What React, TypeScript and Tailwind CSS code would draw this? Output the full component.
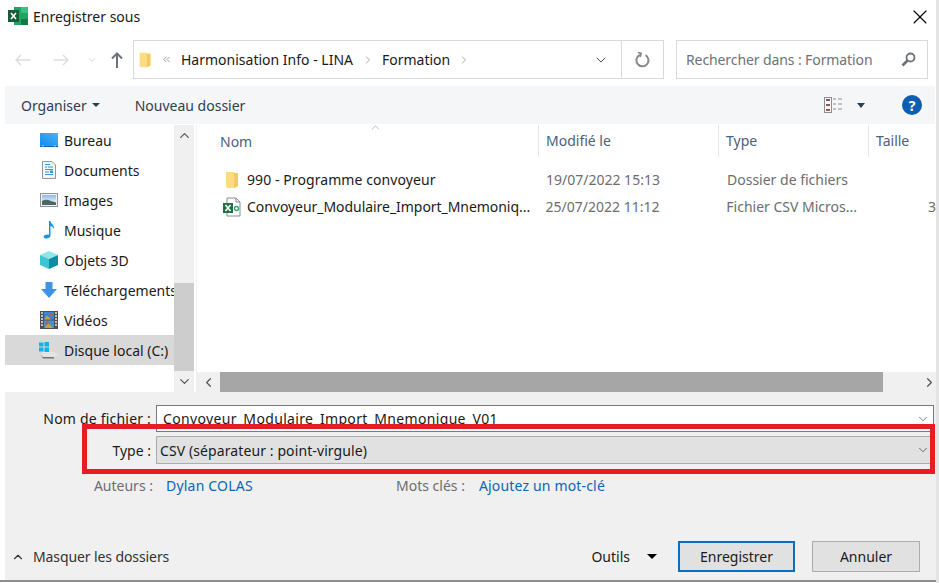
import { ChevronDown, ChevronLeft, ChevronRight, ChevronUp, ChevronsLeft, X } from 'lucide-react';

const font = { fontFamily: '"Noto Sans", "Open Sans", sans-serif' };

function FolderIcon() {
  return (
    <svg width="14" height="18" viewBox="0 0 14 18">
      <path d="M1 1h8l1 1h3v13l-4 2H2l-1-2z" fill="#fbdc85" />
      <path d="M9 2h4v13l-4 2z" fill="#f4c95f" />
    </svg>
  );
}

function ExcelCsvIcon() {
  return (
    <svg width="20" height="20" viewBox="0 0 20 20">
      <path d="M5 1h9l4 4v14H5z" fill="#fff" stroke="#8a8a8a" />
      <path d="M14 1v4h4" fill="none" stroke="#8a8a8a" />
      <rect x="1" y="6" width="10" height="10" fill="#1e7145" />
      <path d="M3.500 8l5 6M8.500 8l-5 6" stroke="#fff" strokeWidth="1.600" />
      <circle cx="14.500" cy="11.500" r="2" fill="none" stroke="#35a06b" strokeWidth="1.300" />
    </svg>
  );
}

function BureauIcon() {
  return (
    <svg width="18" height="14" viewBox="0 0 18 14">
      <defs>
        <linearGradient id="desk" x1="0" y1="1" x2="1" y2="0">
          <stop offset="0" stopColor="#0f8bee" />
          <stop offset="1" stopColor="#4cb2f5" />
        </linearGradient>
      </defs>
      <rect width="18" height="12.500" fill="url(#desk)" />
      <path d="M0 12.500h18V14H0z" fill="#0a5ea8" />
      <path d="M2 13h2M14 13h2" stroke="#9ed4f8" />
    </svg>
  );
}

function DocumentsIcon() {
  return (
    <svg width="14" height="18" viewBox="0 0 14 18">
      <path d="M.5.5h9.500l3.500 3.500v13.500H.5z" fill="#f3f5f7" stroke="#8f979e" />
      <path d="M3 3.500h5M3 6h2M6 6h5M3 8.500h8M3 11h4M8 11h3M3 13.500h8" stroke="#3b94d6" />
      <rect x="8" y="9.500" width="3" height="2.500" fill="#3b94d6" />
    </svg>
  );
}

function ImagesIcon() {
  return (
    <svg width="18" height="14" viewBox="0 0 18 14">
      <defs>
        <linearGradient id="sky" x1="0" y1="0" x2="0" y2="1">
          <stop offset="0" stopColor="#8dbbe0" />
          <stop offset="0.6" stopColor="#d5e6ee" />
        </linearGradient>
      </defs>
      <rect x="0.500" y="0.500" width="17" height="13" fill="#f4f4f4" stroke="#8d9298" />
      <rect x="2" y="2" width="14" height="10" fill="url(#sky)" />
      <path d="M2 8c3-2 6-1.500 9 0l5 1.500V12H2z" fill="#4f6666" />
    </svg>
  );
}

function MusicIcon() {
  return (
    <svg width="12" height="18" viewBox="0 0 12 18">
      <path d="M6 0h1.500c.5 3 4 3.500 3.500 8-1-2-2.500-3-3.500-3v9.500c0 2-2.500 3.500-5 3C.5 17 0 15 2 14c1.500-.8 3-.7 4-.2z" fill="#1a93e8" />
    </svg>
  );
}

function CubeIcon() {
  return (
    <svg width="18" height="18" viewBox="0 0 18 18">
      <path d="M9 0l9 4-9 4-9-4z" fill="#8fe6e8" />
      <path d="M0 4l9 4v10l-9-4z" fill="#3cc6d2" />
      <path d="M18 4l-9 4v10l9-4z" fill="#0d8ca6" />
    </svg>
  );
}

function DownloadIcon() {
  return (
    <svg width="16" height="16" viewBox="0 0 16 16">
      <path d="M4.500 0h7v7H16l-8 9-8-9h4.500z" fill="#3f93e4" />
    </svg>
  );
}

function VideoIcon() {
  return (
    <svg width="18" height="18" viewBox="0 0 18 18">
      <rect width="18" height="18" fill="#4b5058" />
      <rect x="4" y="1" width="10" height="7.500" fill="#3f86c9" />
      <rect x="4" y="9.500" width="10" height="7.500" fill="#4f8fc2" />
      <path d="M4 8.500l3-4 4 4zM5 17l3-5 5 5z" fill="#c9a23a" />
      <circle cx="11" cy="4" r="1.600" fill="#d0544a" />
      <circle cx="7" cy="12" r="1.600" fill="#d0544a" />
      <path d="M1 2h2M1 5h2M1 8h2M1 11h2M1 14h2M15 2h2M15 5h2M15 8h2M15 11h2M15 14h2" stroke="#e6e6e6" strokeWidth="1.300" />
    </svg>
  );
}

function DiskIcon() {
  return (
    <svg width="20" height="18" viewBox="0 0 20 18">
      <path d="M3 11h11l6 2.500-5 2.500H3z" fill="#e4e5e7" />
      <path d="M2 13.500l2 2.500h11v1.500H4z" fill="#6f7276" />
      <path d="M0 1.500h4.500v4H0zM5.500 1h4.500v4.500H5.500zM0 6.500h4.500v4H0zM5.500 6.500h4.500V11H5.500z" fill="#12b0ee" />
    </svg>
  );
}

function NavArrow({ flip }: { flip?: boolean }) {
  return (
    <svg width="16" height="12" viewBox="0 0 16 12" className={flip ? '-scale-x-100 text-[#dcdee0]' : 'text-[#dcdee0]'}>
      <path d="M15.500 6H1M6 1L1 6l5 5" fill="none" stroke="currentColor" strokeWidth="1.500" />
    </svg>
  );
}

function RefreshIcon() {
  return (
    <svg width="16" height="16" viewBox="0 0 16 16" className="text-[#85898e]">
      <path d="M10.500 3.200A6 6 0 1 1 5 2.900" fill="none" stroke="currentColor" strokeWidth="2" />
      <path d="M3 .5l3 .9-.8 3.600" fill="none" stroke="currentColor" strokeWidth="1.800" />
    </svg>
  );
}

function SearchIcon() {
  return (
    <svg width="15" height="15" viewBox="0 0 15 15" className="ml-auto mr-[2px] text-[#6d7278]">
      <circle cx="9.500" cy="5.500" r="4" fill="none" stroke="currentColor" strokeWidth="1.800" />
      <path d="M6.500 8.500L1.500 13.500" stroke="currentColor" strokeWidth="2.600" />
    </svg>
  );
}

const navItems = [
  { label: 'Bureau', icon: <BureauIcon /> },
  { label: 'Documents', icon: <DocumentsIcon /> },
  { label: 'Images', icon: <ImagesIcon /> },
  { label: 'Musique', icon: <MusicIcon /> },
  { label: 'Objets 3D', icon: <CubeIcon /> },
  { label: 'Téléchargements', icon: <DownloadIcon /> },
  { label: 'Vidéos', icon: <VideoIcon /> },
  { label: 'Disque local (C:)', icon: <DiskIcon />, selected: true },
];

const files = [
  { name: '990 - Programme convoyeur', spacing: 'tracking-[0.08px]', date: '19/07/2022 15:13', type: 'Dossier de fichiers', size: '', icon: <FolderIcon /> },
  { name: 'Convoyeur_Modulaire_Import_Mnemoniq...', spacing: 'tracking-[-0.05px]', date: '25/07/2022 11:12', type: 'Fichier CSV Micros...', size: '3', icon: <ExcelCsvIcon /> },
];

export default function App() {
  return (
    <div style={font} className="relative flex h-[583px] w-[939px] flex-col overflow-hidden border-r-[3px] border-[#e4e4e4] bg-white pl-[5px] text-[14px] text-[#1a1a1a]">
      {/* Title bar */}
      <div className="-ml-[5px] flex h-[33px] items-center pl-[8px] pr-[4px]">
        <svg width="20" height="20" viewBox="0 0 20 20" className="mb-[1px]">
          <rect x="6" y="1" width="14" height="18" fill="#21a366" />
          <rect x="13" y="1" width="7" height="6" fill="#33c481" />
          <rect x="13" y="13" width="7" height="6" fill="#107c41" />
          <rect y="4" width="11" height="12" fill="#185c37" />
          <path d="M3 7l5 6M8 7l-5 6" stroke="#fff" strokeWidth="1.600" />
        </svg>
        <span className="ml-[5px]">Enregistrer sous</span>
        <X size={24} strokeWidth={1.1} className="ml-auto text-black" />
      </div>

      {/* Address row */}
      <div className="mt-[7px] flex h-[39px] items-center">
        <div className="flex w-[128px] items-center pl-[10px]">
          <NavArrow />
          <span className="ml-[22px]">
            <NavArrow flip />
          </span>
          <ChevronDown size={12} strokeWidth={1.800} className="ml-[17px] text-[#d4d6d8]" />
          <svg width="12" height="16" viewBox="0 0 12 16" className="ml-[13px] text-[#6d7278]">
            <path d="M6 16V1.500M1 6.500l5-5 5 5" fill="none" stroke="currentColor" strokeWidth="2" />
          </svg>
        </div>
        <div className="flex h-full w-[531px] items-center border border-[#d9d9d9]">
          <div className="ml-[4px] scale-90">
            <FolderIcon />
          </div>
          <ChevronsLeft size={11} strokeWidth={1.500} className="ml-[9px] text-[#6d7278]" />
          <span className="ml-[9px]">Harmonisation Info - LINA</span>
          <ChevronRight size={12} strokeWidth={1.500} className="ml-[9px] text-[#8a8a8a]" />
          <span className="ml-[8px]">Formation</span>
          <ChevronRight size={12} strokeWidth={1.500} className="ml-[8px] text-[#8a8a8a]" />
          <ChevronDown size={16} strokeWidth={1.500} className="ml-auto mr-[12px] text-[#555]" />
          <div className="flex h-full w-[42px] items-center justify-center border-l border-[#d9d9d9]">
            <RefreshIcon />
          </div>
        </div>
        <div className="ml-[12px] flex h-full w-[252px] items-center border border-[#d9d9d9] px-[9px] text-[#6d7278]">
          <span className="tracking-[-0.1px]">Rechercher dans : Formation</span>
          <SearchIcon />
        </div>
      </div>

      {/* Toolbar */}
      <div className="mr-[1px] mt-[7px] flex h-[38px] items-center bg-[#f5f6f7] pl-[16px] pr-[13px] text-[#2c3e50]">
        <span>Organiser</span>
        <span className="ml-[5px] h-0 w-0 border-x-[4px] border-t-[4px] border-x-transparent border-t-[#2c3e50]" />
        <span className="ml-[35px]">Nouveau dossier</span>
        <svg width="20" height="16" viewBox="0 0 20 16" className="ml-auto text-[#8a8f95]">
          <rect x="0.500" y="0.500" width="7" height="15" fill="none" stroke="currentColor" />
          <path d="M2 3h4M2 8h4M2 13h4" stroke="#8a5a5a" strokeWidth="2" />
          <path d="M9 2h3M14 2h4M9 7h3M14 7h4M9 12h3M14 12h4" stroke="currentColor" />
        </svg>
        <span className="ml-[13px] h-0 w-0 border-x-[4px] border-t-[5px] border-x-transparent border-t-[#2c3e50]" />
        <span className="ml-[37px] flex h-[20px] w-[20px] items-center justify-center rounded-full bg-[#0b5eb0] text-[14px] font-bold text-white">?</span>
      </div>

      {/* Main area */}
      <div className="mt-[1px] flex h-[267px]">
        <div className="w-[169px] overflow-hidden">
          {navItems.map((item) => (
            <div key={item.label} className={`flex h-[30px] items-center whitespace-nowrap ${item.selected ? 'bg-[#d9d9d9]' : ''}`}>
              <span className="flex w-[59px] shrink-0 justify-center pl-[29px]">{item.icon}</span>
              <span>{item.label}</span>
            </div>
          ))}
        </div>

        {/* Vertical scrollbar */}
        <div className="flex w-[20px] flex-col items-center bg-[#f0f0f0] text-[#555]">
          <div className="flex h-[20px] items-center">
            <ChevronUp size={15} strokeWidth={2} />
          </div>
          <div className="mt-[138px] h-[88px] w-full bg-[#cdcdcd]" />
          <div className="flex h-[21px] items-center">
            <ChevronDown size={15} strokeWidth={2} />
          </div>
        </div>

        <div className="ml-[2px] flex min-w-0 flex-1 flex-col border-l border-[#f0f0f0]">
          <div className="relative flex-1">
            {/* Column headers */}
            <div className="relative flex h-[32px] items-center text-[#4c607a]">
              <ChevronUp size={13} strokeWidth={1} className="absolute left-[172px] -top-[4px] text-[#888]" />
              <span className="w-[341px] pl-[23px]">Nom</span>
              <span className="h-full w-[180px] border-l border-[#e5e5e5] pl-[7px] leading-[32px]">Modifié le</span>
              <span className="h-full w-[150px] border-l border-[#e5e5e5] pl-[7px] leading-[32px]">Type</span>
              <span className="h-full flex-1 border-l border-[#e5e5e5] pl-[7px] leading-[32px]">Taille</span>
            </div>
            <div className="mt-[9px]">
              {files.map((file) => (
                <div key={file.name} className="flex h-[27px] items-center whitespace-nowrap">
                  <span className="flex w-[50px] shrink-0 justify-center pl-[20px]">{file.icon}</span>
                  <span className={`w-[292px] ${file.spacing}`}>{file.name}</span>
                  <span className="w-[180px] pl-[7px] text-[#6d6d6d]">{file.date}</span>
                  <span className="w-[210px] pl-[8px] text-[#6d6d6d]">{file.type}</span>
                  <span className="text-[#6d6d6d]">{file.size}</span>
                </div>
              ))}
            </div>
          </div>

          {/* Horizontal scrollbar */}
          <div className="flex h-[20px] items-center bg-[#f0f0f0] text-[#555]">
            <ChevronLeft size={15} strokeWidth={2} className="ml-[4px]" />
            <div className="ml-[4px] h-full w-[663px] bg-[#a6a6a6]" />
            <ChevronRight size={15} strokeWidth={2} className="ml-auto -mr-[1px]" />
          </div>
        </div>
      </div>

      {/* Save form */}
      <div className="flex h-[188px] flex-col bg-[#f0f0f0] pr-[1px]">
        <div className="mt-[13px] flex h-[27px] items-center">
          <span className="w-[146px] text-right tracking-[0.2px]">Nom de fichier :</span>
          <div className="ml-[5px] flex h-full w-[778px] items-center justify-between border border-[#7a7a7a] bg-white pl-[6px] pr-[3px]">
            <span className="tracking-[0.34px]">Convoyeur_Modulaire_Import_Mnemonique_V01</span>
            <ChevronDown size={14} strokeWidth={1} />
          </div>
        </div>
        <div className="mt-[4px] flex h-[28px] items-center">
          <span className="w-[146px] text-right">Type :</span>
          <div className="ml-[5px] flex h-full w-[778px] items-center justify-between border border-[#adadad] bg-[#e1e1e1] pl-[3px] pr-[3px]">
            <span className="tracking-[0.1px]">CSV (séparateur : point-virgule)</span>
            <ChevronDown size={14} strokeWidth={1} />
          </div>
        </div>
        <div className="mt-[11px] flex items-center">
          <span className="w-[148px] text-right text-[#6d6d6d]">Auteurs :</span>
          <span className="ml-[13px] w-[87px] tracking-[0.2px] text-[#0a66b7]">Dylan COLAS</span>
          <span className="ml-[143px] text-[#6d6d6d]">Mots clés :</span>
          <span className="ml-[14px] tracking-[0.17px] text-[#0a66b7]">Ajoutez un mot-clé</span>
        </div>
        <div className="mt-auto mb-[8px] flex h-[31px] items-center pr-[15px]">
          <ChevronUp size={14} strokeWidth={2} className="ml-[6px] text-[#333]" />
          <span className="ml-[8px] tracking-[-0.1px] text-[#333]">Masquer les dossiers</span>
          <span className="ml-auto">Outils</span>
          <span className="ml-[17px] h-0 w-0 border-x-[5px] border-t-[5px] border-x-transparent border-t-black" />
          <button className="ml-[21px] h-full w-[117px] border-2 border-[#0a6fbe] bg-[#e1e1e1]">Enregistrer</button>
          <button className="ml-[17px] h-full w-[108px] border border-[#adadad] bg-[#e1e1e1]">Annuler</button>
        </div>
      </div>
      <div className="-ml-[5px] h-[2px] shrink-0 bg-[#8c8c8c]" />

      {/* Red annotation drawn over the form */}
      <div className="absolute left-[82px] top-[424px] h-[50px] w-[853px] border-[5px] border-[#e81c24]" />
    </div>
  );
}
